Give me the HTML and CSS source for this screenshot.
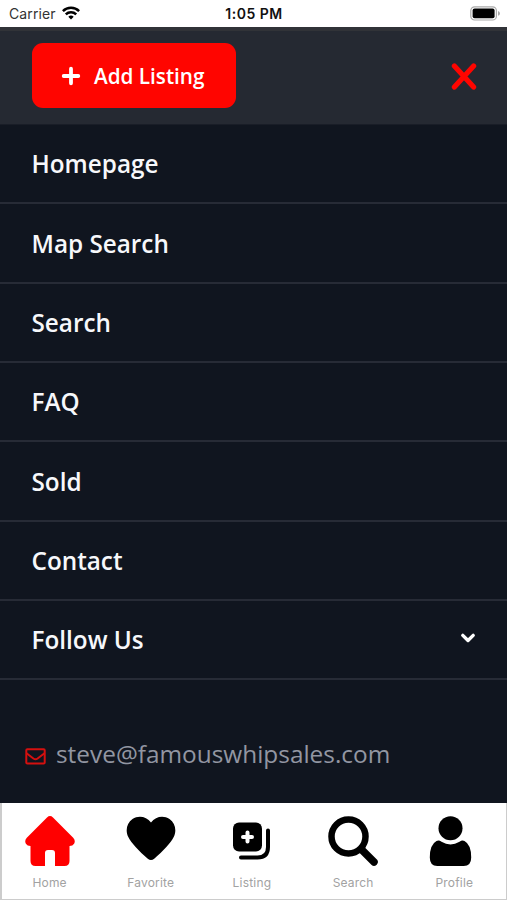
FILE: index.html
```
<!DOCTYPE html>
<html lang="en">
<head>
<meta charset="utf-8">
<title>Menu</title>
<link rel="stylesheet" href="styles.css">
</head>
<body>
<div class="screen">
  <div class="status">
    <div class="carrier"><span>Carrier</span>
      <svg width="18" height="14" viewBox="0 0 18 14" fill="none" stroke="#000" stroke-width="2.5"><path d="M.9 5.1a11.5 11.5 0 0 1 16.2 0M3.8 8.3a7.4 7.4 0 0 1 10.4 0"/><path d="M9 13.6l-2.7-2.900a3.900 3.900 0 0 1 5.400 0z" fill="#000" stroke="none"/></svg>
    </div>
    <div class="time">1:05 PM</div>
    <svg class="battery" width="31" height="15" viewBox="0 0 31 15"><rect x=".8" y=".8" width="25.6" height="13.2" rx="3.8" fill="#fff" stroke="#aaa" stroke-width="1.2"/><rect x="2.6" y="2.6" width="22" height="9.6" rx="2" fill="#000"/><path d="M28 5.1q2 .7 2 2.3t-2 2.3z" fill="#aaa"/></svg>
  </div>
  <header class="top">
    <button class="add">
      <svg width="20" height="20" viewBox="0 0 20 20" stroke="#fff" stroke-width="3.8" stroke-linecap="round"><path d="M10 2.700v14.600M2.700 10h14.600"/></svg>
      <span>Add Listing</span>
    </button>
    <svg class="close" width="26" height="28" viewBox="0 0 26 28" stroke="#ff0500" stroke-width="5.2" stroke-linecap="round"><path d="M3.400 4l19.200 21M22.600 4L3.400 25"/></svg>
  </header>
  <nav class="menu">
    <a>Homepage</a>
    <a>Map Search</a>
    <a>Search</a>
    <a>FAQ</a>
    <a>Sold</a>
    <a>Contact</a>
    <a>Follow Us<svg class="chevron" width="16" height="12" viewBox="0 0 16 12" fill="none" stroke="#fff" stroke-width="3.4" stroke-linecap="round" stroke-linejoin="round"><path d="M2.8 3.4L8 8.500l5.200-5.100"/></svg></a>
  </nav>
  <div class="mail">
    <svg width="21" height="17" viewBox="0 0 21 17" fill="none" stroke="#d5100f" stroke-width="2" stroke-linejoin="round"><rect x="1.3" y="1.3" width="18.4" height="14.2" rx="1"/><path d="M1.5 5.2l6.9 5.3q2.1 1.5 4.2 0l6.9-5.3"/></svg>
    <span>steve@famouswhipsales.com</span>
  </div>
  <footer class="tabs">
    <div class="tab">
      <svg width="50" height="50" viewBox="0 0 50 50"><path fill="#f00" d="M22 1.500q3-2.800 6 0L48.200 21.700q2.600 3 .9 6-1.300 2.300-4.600 2.300V45q0 5-5 5H30V37q0-3-3-3h-4q-3 0-3 3v13H10.500q-5 0-5-5V30Q2.200 30 .9 27.700-.8 24.700 1.800 21.700z"/></svg>
      <span>Home</span>
    </div>
    <div class="tab">
      <svg width="50" height="50" viewBox="0 0 50 50"><path d="M25 6.500C29.500.4 37.500-1 43.500 3c5.800 4 7.400 11.500 4.200 18-3.200 6.400-10.500 13.800-19.500 21.800q-3.200 2.600-6.400 0C12.800 34.800 5.500 27.400 2.300 21-.9 14.500.7 7 6.500 3 12.500-1 20.500.4 25 6.500z"/></svg>
      <span>Favorite</span>
    </div>
    <div class="tab">
      <svg width="50" height="50" viewBox="0 0 50 50"><rect x="6" y="6.500" width="29" height="29" rx="6"/><path d="M20.500 16.500v9M16 21h9" stroke="#fff" stroke-width="4" stroke-linecap="round"/><path d="M41 14.500V31q0 10.500-10.500 10.500H14" fill="none" stroke="#000" stroke-width="4" stroke-linecap="round"/></svg>
      <span>Listing</span>
    </div>
    <div class="tab">
      <svg width="50" height="50" viewBox="0 0 50 50" fill="none" stroke="#000"><circle cx="20.500" cy="20.500" r="17" stroke-width="6.500"/><path d="M34 34l12 12" stroke-width="7.500" stroke-linecap="round"/></svg>
      <span>Search</span>
    </div>
    <div class="tab">
      <svg width="50" height="50" viewBox="3.500 0 50 50"><circle cx="25" cy="12.200" r="12"/><path d="M11 25q2.500-1.200 5 .8 9 5.200 18 0 2.500-2 5-.8 6.700 3.500 6.700 16.500 0 8.500-7.500 8.500H11.800q-7.500 0-7.500-8.500Q4.300 28.500 11 25z"/></svg>
      <span>Profile</span>
    </div>
  </footer>
</div>
</body>
</html>
```

FILE: styles.css
```
* { box-sizing: border-box; }
body { margin: 0; }
.screen {
  width: 507px;
  height: 900px;
  display: flex;
  flex-direction: column;
  overflow: hidden;
  background: #10151f;
  font-family: "Open Sans", sans-serif;
}
.screen svg { display: block; flex: none; }
.status {
  height: 27px;
  flex: none;
  background: #fff;
  display: grid;
  grid-template-columns: 1fr auto 1fr;
  align-items: center;
  padding: 0 6px 0 9px;
  font: 14px/27px Inter, sans-serif;
  color: #333;
}
.carrier { display: flex; align-items: center; gap: 6px; letter-spacing: .1px; }
.carrier svg { margin-bottom: 2px; }
.time { font-weight: 600; font-size: 14px; letter-spacing: .5px; margin-right: 2px; color: #111; }
.battery { justify-self: end; }
.top {
  height: 98px;
  flex: none;
  background: #252932;
  border-top: 4px solid #313338;
  border-bottom: 1px solid #191d27;
  display: flex;
  align-items: center;
  justify-content: space-between;
  padding: 0 30px 4px 31.500px;
}
.add {
  width: 204px;
  height: 65px;
  border: 0;
  border-radius: 11px;
  background: #ff0500;
  color: #fff;
  display: flex;
  align-items: center;
  gap: 13px;
  padding: 0 0 0 29.500px;
  font: 600 20.700px/28px "Open Sans", sans-serif;
}
.menu a {
  height: 79.350px;
  border-bottom: 2px solid #272b36;
  display: flex;
  align-items: center;
  justify-content: space-between;
  padding: 0 31px 0 31.500px;
  color: #f7f8fb;
  font-size: 24.300px;
  font-weight: 600;
}
.chevron { margin-top: -4px; }
.mail {
  flex: 1;
  display: flex;
  align-items: center;
  gap: 10px;
  padding: 24px 0 0 25px;
  color: #9296a2;
  font-size: 24.400px;
}
.mail svg { margin-top: 5px; }
.tabs {
  height: 97px;
  flex: none;
  background: #fff;
  border: solid #ccc;
  border-width: 0 1px 1px 2px;
  display: grid;
  grid-template-columns: repeat(5, 101.200px);
  padding-top: 13.400px;
}
.tab {
  display: flex;
  flex-direction: column;
  align-items: center;
  margin-left: -6px;
  gap: 8px;
  font: 12px/18px Inter, sans-serif;
  letter-spacing: .2px;
  color: #a2a2a2;
}
```
